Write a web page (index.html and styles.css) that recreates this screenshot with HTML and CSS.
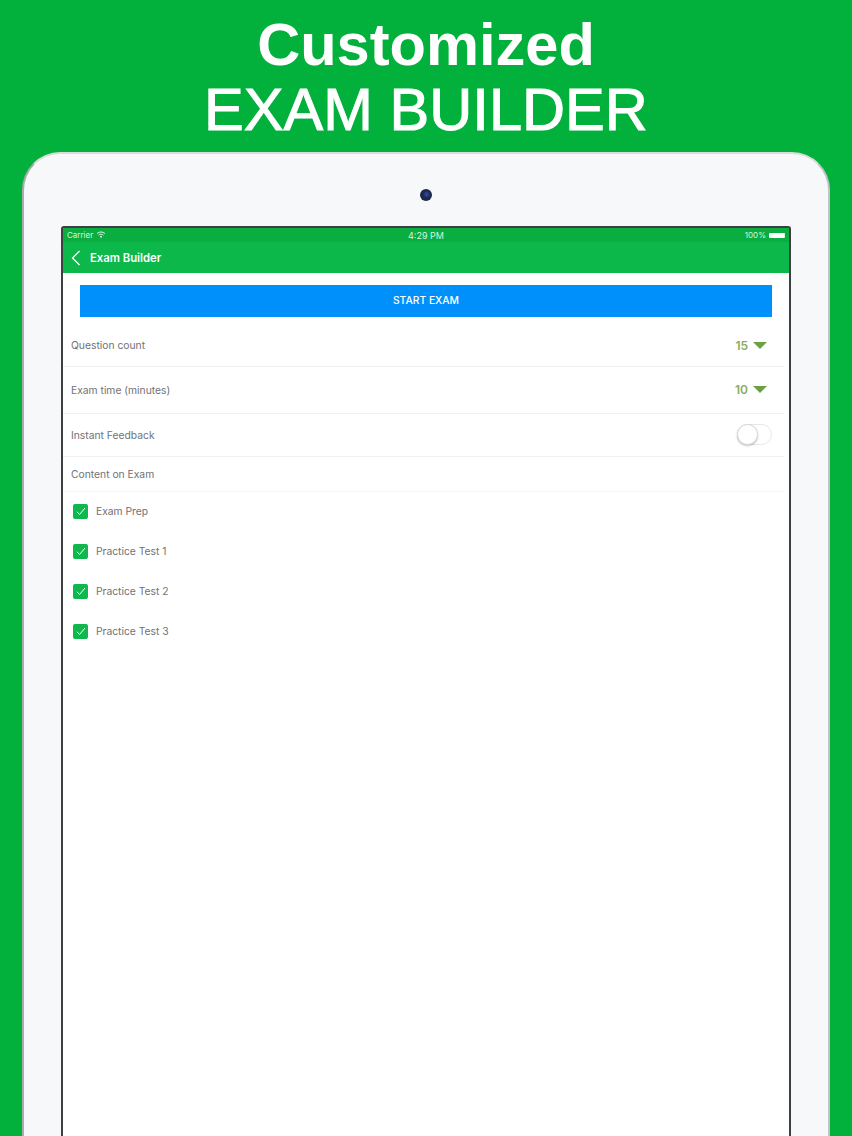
FILE: index.html
```html
<!DOCTYPE html>
<html>
<head>
<title>Exam Builder</title>
<link rel="stylesheet" href="styles.css">
</head>
<body>

<div class="headline">
  <div class="bold">Customized</div>
  <div class="medium">EXAM BUILDER</div>
</div>

<div class="tablet">
  <div class="camera"></div>

  <div class="screen">

    <!-- STATUS BAR -->
    <div class="status">
      <div class="status-left">
        Carrier
        <svg width="10" height="8" viewBox="0 0 10 8"><path d="M1 2.6C3.4.5 6.6.5 9 2.6M2.5 4.2c1.6-1.3 3.4-1.3 5 0" fill="none" stroke="#d8f5e2" stroke-width="1"/><path d="M3.8 5.4c.8-.6 1.6-.6 2.4 0L5 7z" fill="#d8f5e2"/></svg>
      </div>
      <div class="status-time">4:29 PM</div>
      <div class="status-right">
        100%
        <span class="battery"></span>
      </div>
    </div>

    <!-- NAV -->
    <div class="nav">
      <svg width="10" height="16" viewBox="0 0 10 16"><path d="M8.5 1L1.5 8l7 7" fill="none" stroke="#fff" stroke-width="1.3"/></svg>
      <span>Exam Builder</span>
    </div>

    <div class="start-wrap"><div class="start">START EXAM</div></div>

    <div class="row row-count">
      <span>Question count</span>
      <div class="value">15 <span class="arrow"></span></div>
    </div>
    <div class="row row-time line">
      <span>Exam time (minutes)</span>
      <div class="value">10 <span class="arrow"></span></div>
    </div>
    <div class="row row-feedback line">
      <span>Instant Feedback</span>
      <div class="toggle"><div class="knob"></div></div>
    </div>
    <div class="row row-content line">
      <span>Content on Exam</span>
    </div>

    <!-- CONTENT LIST -->
    <div class="checks">
      <div class="check-row">
        <div class="check"><svg width="10" height="9" viewBox="0 0 10 9"><path d="M1 4.8l2.6 2.7L9 1" fill="none" stroke="#fff" stroke-width="1"/></svg></div>
        Exam Prep
      </div>
      <div class="check-row">
        <div class="check"><svg width="10" height="9" viewBox="0 0 10 9"><path d="M1 4.8l2.6 2.7L9 1" fill="none" stroke="#fff" stroke-width="1"/></svg></div>
        Practice Test 1
      </div>
      <div class="check-row">
        <div class="check"><svg width="10" height="9" viewBox="0 0 10 9"><path d="M1 4.8l2.6 2.7L9 1" fill="none" stroke="#fff" stroke-width="1"/></svg></div>
        Practice Test 2
      </div>
      <div class="check-row">
        <div class="check"><svg width="10" height="9" viewBox="0 0 10 9"><path d="M1 4.8l2.6 2.7L9 1" fill="none" stroke="#fff" stroke-width="1"/></svg></div>
        Practice Test 3
      </div>
    </div>

  </div>
</div>

</body>
</html>
```

FILE: styles.css
```css
html, body {height:100%;}
body {margin:0; height:1136px; overflow:hidden; background:#02b13c; font-family:"Inter","Liberation Sans",sans-serif; color:#707276;}

.headline {
  height:152px; padding-top:12px; box-sizing:border-box;
  text-align:center; color:white; font-family:"Liberation Sans",Arial,sans-serif;
  font-size:59.6px; line-height:65px;
}
.bold {font-weight:bold;}
.medium {-webkit-text-stroke:1px white;}

.tablet {
  height:984px; margin:0 22px; box-sizing:border-box; position:relative;
  padding:72px 37px 0 37px;
  background:#f7f8fa;
  border:2px solid #c2c5c6; border-bottom:none; border-top-color:#d9dbdc; border-left-color:#a9acae;
  border-radius:38px 38px 0 0;
}
.camera {
  position:absolute; top:35px; left:396px;
  width:12px; height:12px; border-radius:50%;
  background:radial-gradient(circle at 55% 45%,#2f4fa6 0,#1c2750 40%,#24272d 100%);
}

.screen {
  height:910px; background:white;
  border:2px solid #3d4042; border-bottom:none; border-radius:3px 3px 0 0;
}

.status {
  height:14px; display:flex; align-items:center; justify-content:space-between;
  position:relative; background:#09ad40; color:#d8f5e2; font-size:8px; padding:0 4px;
}
.status-left, .status-right {display:flex; align-items:center; gap:3px;}
.status-time {position:absolute; left:0; right:0; text-align:center; font-size:9px;}
.battery {display:block; width:15px; height:5px; background:white; border-radius:1px; border-right:1px solid #d8f5e2;}

.nav {
  height:31px; display:flex; align-items:center; gap:9px; padding-left:8px;
  background:#0cb84a; color:white; font-size:11.3px; font-weight:600;
}

.start-wrap {padding:12px 17px 0 17px;}
.start {
  height:32px; line-height:31px; text-align:center;
  background:#0090fb; color:white; font-size:10.3px; font-weight:500;
}

.row {
  display:flex; align-items:center; justify-content:space-between; box-sizing:border-box;
  font-size:10.3px; margin-right:5px; padding:0 17px 1px 8px;
}
.line {border-top:1px solid #eff0f2;}
.row-count {height:49px; padding-top:7px; padding-bottom:0;}
.row-time {height:47px;}
.row-feedback {height:43px; padding-right:12px;}
.row-content {height:36px; border-bottom:1px solid #f3f4f6;}

.value {display:flex; align-items:center; gap:5px; font-size:12px; font-weight:600; color:#8bac5f;}
.arrow {
  display:block; width:0; height:0;
  border-left:7px solid transparent; border-right:7px solid transparent;
  border-top:7px solid #6d9f45;
}

.toggle {
  width:35px; height:21px; box-sizing:border-box; position:relative;
  border:1px solid #e6e7e9; border-radius:11px; background:white;
}
.knob {
  position:absolute; left:-1px; top:-1px; width:21px; height:21px; box-sizing:border-box;
  border-radius:50%; background:white; border:1px solid #d8d9db; box-shadow:0 1px 2px rgba(0,0,0,.25);
}

.checks {margin-top:-1px;}
.check-row {height:40px; display:flex; align-items:center; gap:8px; padding-left:10px; font-size:10.3px;}
.check {
  width:15px; height:15px; display:flex; align-items:center; justify-content:center;
  background:#0fb84c; border-radius:2px;
}
```
